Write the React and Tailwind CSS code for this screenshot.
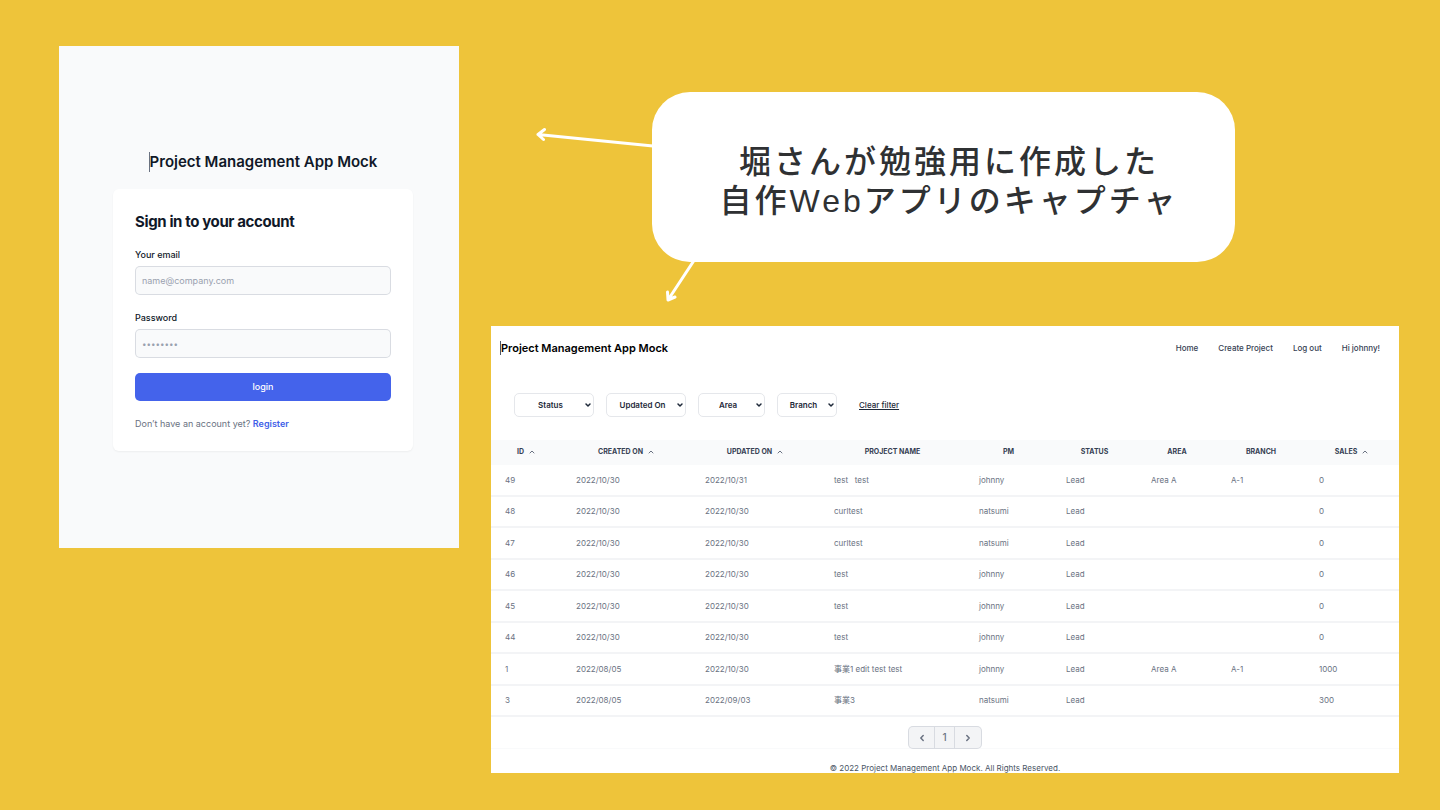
import { useState } from "react";

const columns = [
    { label: "ID", sortable: true, width: "w-[71px]" },
    { label: "Created On", sortable: true, width: "w-[129px]" },
    { label: "Updated On", sortable: true, width: "w-[129px]" },
    { label: "Project Name", width: "w-[145px]" },
    { label: "PM", width: "w-[87px]" },
    { label: "Status", width: "w-[85px]" },
    { label: "Area", width: "w-[80px]" },
    { label: "Branch", width: "w-[88px]" },
    { label: "Sales", sortable: true, width: "w-[94px]" },
];

const projects = [
    [49, "2022/10/30", "2022/10/31", "test   test", "johnny", "Lead", "Area A", "A-1", 0],
    [48, "2022/10/30", "2022/10/30", "curltest", "natsumi", "Lead", "", "", 0],
    [47, "2022/10/30", "2022/10/30", "curltest", "natsumi", "Lead", "", "", 0],
    [46, "2022/10/30", "2022/10/30", "test", "johnny", "Lead", "", "", 0],
    [45, "2022/10/30", "2022/10/30", "test", "johnny", "Lead", "", "", 0],
    [44, "2022/10/30", "2022/10/30", "test", "johnny", "Lead", "", "", 0],
    [1, "2022/08/05", "2022/10/30", "事業1 edit test test", "johnny", "Lead", "Area A", "A-1", 1000],
    [3, "2022/08/05", "2022/09/03", "事業3", "natsumi", "Lead", "", "", 300],
];

const filters = [
    { label: "Status", width: "w-20" },
    { label: "Updated On", width: "w-20" },
    { label: "Area", width: "w-[67px]" },
    { label: "Branch", width: "w-[60px]" },
];

function Chevron({ d, className }) {
    return (
        <svg viewBox="0 0 8 8" fill="none" stroke="currentColor" strokeLinecap="round" strokeLinejoin="round" className={className} aria-hidden="true">
            <path d={d} />
        </svg>
    );
}

function LoginPanel() {
    const [email, setEmail] = useState("");
    const [password, setPassword] = useState("");

    const inputClass =
        "block w-full h-[29px] mt-1 px-1.5 rounded-[5px] border border-gray-300/80 bg-gray-50 text-[9px] text-gray-900 placeholder:text-gray-400";

    return (
        <section className="w-[400px] shrink-0 bg-gray-50 pl-[54px] pr-[46px] pt-[106px] pb-[97px]">
            <div className="flex justify-center">
                <h1 className="border-l border-gray-500 text-[15px] leading-5 font-semibold text-gray-900">
                    Project Management App Mock
                </h1>
            </div>

            <form
                onSubmit={(e) => e.preventDefault()}
                className="mt-[17px] px-[22px] pt-[21px] pb-5 rounded-md bg-white shadow-xs"
            >
                <h2 className="text-[15px] leading-6 font-bold tracking-tight text-gray-900">
                    Sign in to your account
                </h2>

                {/* EMAIL */}
                <div className="mt-[13px]">
                    <label htmlFor="email" className="block text-[9px] leading-[15px] font-medium text-gray-900">
                        Your email
                    </label>
                    <input
                        id="email"
                        type="email"
                        placeholder="name@company.com"
                        value={email}
                        onChange={(e) => setEmail(e.target.value)}
                        className={inputClass}
                    />
                </div>

                {/* PASSWORD */}
                <div className="mt-[15px]">
                    <label htmlFor="password" className="block text-[9px] leading-[15px] font-medium text-gray-900">
                        Password
                    </label>
                    <input
                        id="password"
                        type="password"
                        placeholder="••••••••"
                        value={password}
                        onChange={(e) => setPassword(e.target.value)}
                        className={`${inputClass} placeholder:text-[8px]`}
                    />
                </div>

                <button
                    type="submit"
                    className="block w-full h-7 mt-[15px] rounded-[5px] bg-[#4463eb] text-[9px] font-medium text-white"
                >
                    login
                </button>

                <p className="mt-[15px] text-[9px] leading-[15px] text-gray-500">
                    Don’t have an account yet?{" "}
                    <a href="#register" className="font-semibold text-[#3f5fe8]">
                        Register
                    </a>
                </p>
            </form>
        </section>
    );
}

function Callout() {
    return (
        <div className="relative w-[583px] mx-auto pt-[51px] pb-[41px] pl-3 rounded-[38px] bg-white text-center">
            <p className="font-['Liberation_Sans','Noto_Sans_CJK_JP',sans-serif] text-[32px] leading-[39px] font-medium tracking-[3px] text-[#2f3133]">
                堀さんが勉強用に作成した
                <br />
                自作Webアプリのキャプチャ
            </p>

            {/* arrow to the login screen */}
            <svg
                viewBox="0 0 118 24"
                className="absolute top-8 -left-[117px] w-[118px] h-6"
                fill="none"
                stroke="white"
                strokeWidth="3"
                strokeLinecap="round"
                strokeLinejoin="round"
                aria-hidden="true"
            >
                <path d="M3 10.5 L118 22 M9.5 5.5 L3 10.5 L8.5 15.5" />
            </svg>

            {/* arrow to the project list */}
            <svg
                viewBox="0 0 32 44"
                className="absolute top-[167px] left-[13px] w-8 h-11"
                fill="none"
                stroke="white"
                strokeWidth="3"
                strokeLinecap="round"
                strokeLinejoin="round"
                aria-hidden="true"
            >
                <path d="M3 41 L30 0 M2.5 33 L3 41 L10 38" />
            </svg>
        </div>
    );
}

function Filters() {
    return (
        <div className="mt-6 px-[23px] flex items-center gap-3">
            {filters.map((f) => (
                <div key={f.label} className="relative text-gray-800">
                    <select
                        aria-label={f.label}
                        className={`${f.width} block h-6 pl-0 pr-[7px] appearance-none rounded-[5px] border border-gray-200 bg-white text-center text-[8px] font-semibold`}
                    >
                        <option>{f.label}</option>
                    </select>
                    <Chevron d="M2 3 L4 5 L6 3" className="absolute right-0.5 top-2 size-2 stroke-[1.5] pointer-events-none" />
                </div>
            ))}
            <a href="#clear" className="ml-2.5 text-[8px] font-medium text-gray-800 underline underline-offset-1">
                Clear filter
            </a>
        </div>
    );
}

function ProjectTable() {
    return (
        <table className="w-full h-[277px] mt-[23px] table-fixed text-[8px]">
            <thead className="border-b-2 border-gray-50 bg-gray-50 text-gray-700">
                <tr className="h-6">
                    {columns.map((c) => (
                        <th key={c.label} scope="col" className={`${c.width} p-0 pt-px text-[7px] leading-[10px] font-bold uppercase`}>
                            <span className="flex items-center justify-center gap-1">
                                {c.label}
                                {c.sortable && <Chevron d="M2 5 L4 3 L6 5" className="size-2 text-gray-500" />}
                            </span>
                        </th>
                    ))}
                </tr>
            </thead>
            <tbody>
                {projects.map((row) => (
                    <tr key={row[0]} className="border-b-2 border-gray-100 text-gray-500">
                        {row.map((value, i) => (
                            <td key={i} className="p-0 pl-3.5 whitespace-pre">
                                {value}
                            </td>
                        ))}
                    </tr>
                ))}
            </tbody>
        </table>
    );
}

function ProjectsPanel() {
    return (
        <section className="mt-16 bg-white">
            <header className="h-[43px] pl-[9px] pr-[19px] flex items-center justify-between">
                <h1 className="border-l border-gray-600 text-[11px] leading-[14px] font-semibold text-black">
                    Project Management App Mock
                </h1>
                <nav className="flex gap-5 text-[8px] font-medium text-gray-700">
                    <a href="#home">Home</a>
                    <a href="#create">Create Project</a>
                    <a href="#logout">Log out</a>
                    <a href="#profile">Hi johnny!</a>
                </nav>
            </header>

            <Filters />
            <ProjectTable />

            {/* PAGINATION */}
            <div className="h-8 pt-[9px] flex justify-center border-b border-gray-50 text-gray-500">
                <div className="h-[23px] flex rounded-[5px] border border-gray-300/80 bg-gray-100 divide-x divide-gray-300/80">
                    <button type="button" aria-label="Previous page" className="w-[26px] flex items-center justify-center">
                        <Chevron d="M5.2 1.5 L2.8 4 L5.2 6.5" className="size-2 stroke-[1.5]" />
                    </button>
                    <button type="button" className="w-5 text-[10px] font-medium">
                        1
                    </button>
                    <button type="button" aria-label="Next page" className="w-[26px] flex items-center justify-center">
                        <Chevron d="M2.8 1.5 L5.2 4 L2.8 6.5" className="size-2 stroke-[1.5]" />
                    </button>
                </div>
            </div>

            <footer className="pt-3.5 text-center text-[8px] leading-[10px] text-gray-600">
                © 2022 Project Management App Mock. All Rights Reserved.
            </footer>
        </section>
    );
}

export default function App() {
    return (
        <main className="min-h-screen bg-[#eec43a] pt-[46px] pl-[59px] pr-[41px] flex items-start gap-8 font-['Inter','Noto_Sans_CJK_JP',sans-serif]">
            <LoginPanel />
            <div className="flex-1 min-w-0 pt-[46px]">
                <div className="pr-1">
                    <Callout />
                </div>
                <ProjectsPanel />
            </div>
        </main>
    );
}
